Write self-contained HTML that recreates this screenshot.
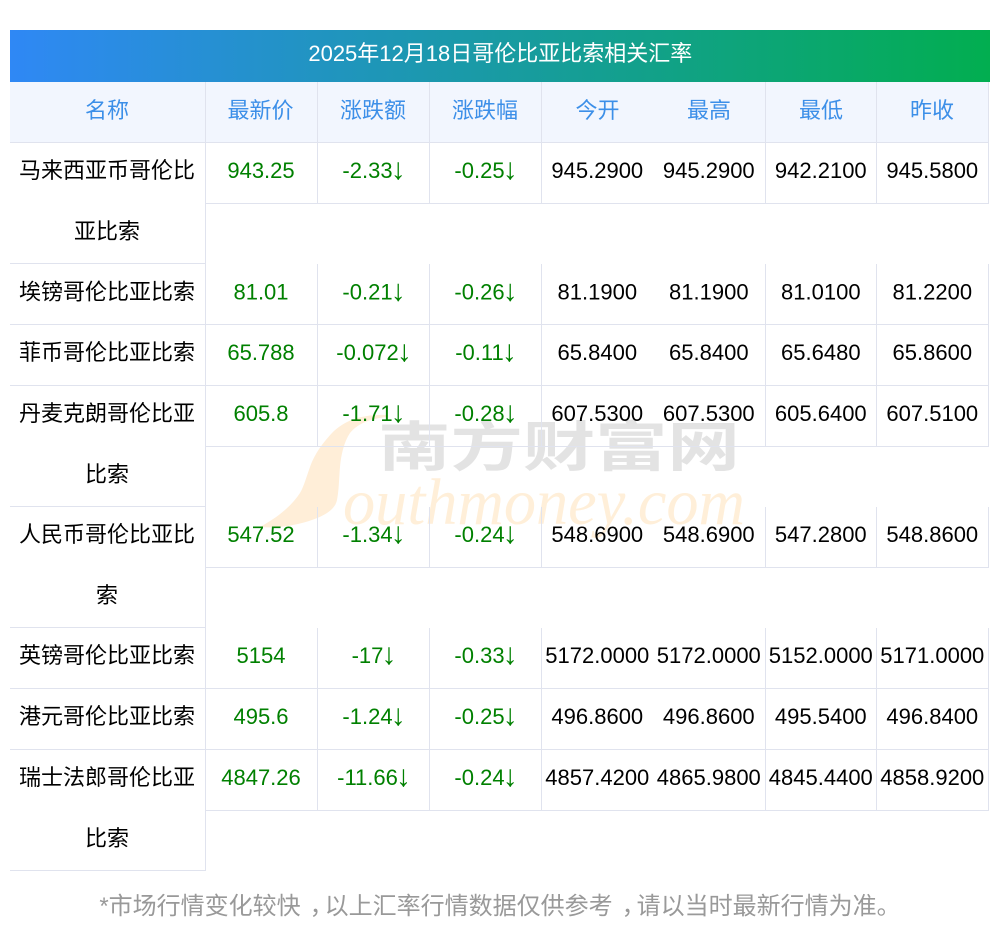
<!DOCTYPE html>
<html lang="zh"><head><meta charset="utf-8"><title>汇率</title>
<style>
html,body{margin:0;padding:0;background:#fff;width:1000px;height:937px;overflow:hidden}
svg{display:block;position:absolute;left:0;top:0}
text{font-family:"Liberation Sans","WenQuanYi Zen Hei",sans-serif;font-size:22px;text-anchor:middle}
.h{fill:#3c8fe8}.g{fill:#008000}.b{fill:#000}
.a{font-size:30px}
</style></head><body>
<svg width="1000" height="937" viewBox="0 0 1000 937">
<defs><linearGradient id="t" x1="0" x2="1" y1="0" y2="0"><stop offset="0" stop-color="#2f88f5"/><stop offset="1" stop-color="#02ae50"/></linearGradient></defs>
<rect x="10" y="30" width="980" height="52" fill="url(#t)"/>
<rect x="10" y="82" width="979" height="60" fill="#f2f6fe"/>
<!-- watermark -->
<path d="M388 415C362 414 345 420 332 433C320 446 314 456 310 467C306 478 304 486 300 493C292 505 280 516 260 527C272 528 283 527 293 525C308 522 319 518 327 513C333 509 336 505 337 500C339 490 339 478 340 467C341 455 344 442 350 433C358 423 372 418 388 417Z" fill="#ffeed8"/>
<text transform="translate(559 466) scale(1.34 1)" style="font-family:'Noto Sans CJK SC',sans-serif;font-size:54px;font-weight:700;fill:#e3e3e3">南方财富网</text>
<text x="544" y="524" style="font-family:'Liberation Serif',serif;font-style:italic;font-size:66px;fill:#ffefd9" textLength="402" lengthAdjust="spacingAndGlyphs">outhmoney.com</text>
<!-- grid -->
<g stroke="#e0e3ee" stroke-width="1" fill="none" shape-rendering="crispEdges">
<path d="M10 142.5H989M10 263.5H205M10 324.5H989M10 385.5H989M10 506.5H205M10 627.5H205M10 688.5H989M10 749.5H989M10 870.5H206"/>
<path d="M205 203.5H989M205 446.5H989M205 567.5H989M205 810.5H989"/>
<path d="M205.500 82V871"/>
<path d="M317.500 82V204M317.500 264V447M317.500 507V568M317.500 628V811"/>
<path d="M429.500 82V204M429.500 264V447M429.500 507V568M429.500 628V811"/>
<path d="M541.500 82V204M541.500 264V447M541.500 507V568M541.500 628V811"/>
<path d="M765.500 82V204M765.500 264V447M765.500 507V568M765.500 628V811"/>
<path d="M876.500 82V204M876.500 264V447M876.500 507V568M876.500 628V811"/>
<path d="M988.500 82V204M988.500 264V447M988.500 507V568M988.500 628V811"/>
</g>
<text x="500.300" y="61" fill="#fff">2025年12月18日哥伦比亚比索相关汇率</text>
<g class="h">
<text x="107" y="118">名称</text><text x="260.500" y="118">最新价</text><text x="373" y="118">涨跌额</text><text x="485" y="118">涨跌幅</text><text x="597.500" y="118">今开</text><text x="709" y="118">最高</text><text x="821" y="118">最低</text><text x="932" y="118">昨收</text>
</g>
<g class="b">
<text x="107" y="178">马来西亚币哥伦比</text><text x="107" y="239">亚比索</text>
<text x="107" y="299.500">埃镑哥伦比亚比索</text>
<text x="107" y="360">菲币哥伦比亚比索</text>
<text x="107" y="421">丹麦克朗哥伦比亚</text><text x="107" y="482">比索</text>
<text x="107" y="542">人民币哥伦比亚比</text><text x="107" y="603">索</text>
<text x="107" y="663">英镑哥伦比亚比索</text>
<text x="107" y="724">港元哥伦比亚比索</text>
<text x="107" y="785">瑞士法郎哥伦比亚</text><text x="107" y="846">比索</text>
</g>
<g class="g">
<text x="261" y="178">943.25</text><text x="374" y="178">-2.33<tspan class="a" dx="-2" dy="1">↓</tspan></text><text x="486" y="178">-0.25<tspan class="a" dx="-2" dy="1">↓</tspan></text>
<text x="261" y="299.500">81.01</text><text x="374" y="299.500">-0.21<tspan class="a" dx="-2" dy="1">↓</tspan></text><text x="486" y="299.500">-0.26<tspan class="a" dx="-2" dy="1">↓</tspan></text>
<text x="261" y="360">65.788</text><text x="374" y="360">-0.072<tspan class="a" dx="-2" dy="1">↓</tspan></text><text x="486" y="360">-0.11<tspan class="a" dx="-2" dy="1">↓</tspan></text>
<text x="261" y="421">605.8</text><text x="374" y="421">-1.71<tspan class="a" dx="-2" dy="1">↓</tspan></text><text x="486" y="421">-0.28<tspan class="a" dx="-2" dy="1">↓</tspan></text>
<text x="261" y="542">547.52</text><text x="374" y="542">-1.34<tspan class="a" dx="-2" dy="1">↓</tspan></text><text x="486" y="542">-0.24<tspan class="a" dx="-2" dy="1">↓</tspan></text>
<text x="261" y="663">5154</text><text x="374" y="663">-17<tspan class="a" dx="-2" dy="1">↓</tspan></text><text x="486" y="663">-0.33<tspan class="a" dx="-2" dy="1">↓</tspan></text>
<text x="261" y="724">495.6</text><text x="374" y="724">-1.24<tspan class="a" dx="-2" dy="1">↓</tspan></text><text x="486" y="724">-0.25<tspan class="a" dx="-2" dy="1">↓</tspan></text>
<text x="261" y="785">4847.26</text><text x="374" y="785">-11.66<tspan class="a" dx="-2" dy="1">↓</tspan></text><text x="486" y="785">-0.24<tspan class="a" dx="-2" dy="1">↓</tspan></text>
</g>
<g class="b">
<text x="597.300" y="178">945.2900</text><text x="708.800" y="178">945.2900</text><text x="820.800" y="178">942.2100</text><text x="932.300" y="178">945.5800</text>
<text x="597.300" y="299.500">81.1900</text><text x="708.800" y="299.500">81.1900</text><text x="820.800" y="299.500">81.0100</text><text x="932.300" y="299.500">81.2200</text>
<text x="597.300" y="360">65.8400</text><text x="708.800" y="360">65.8400</text><text x="820.800" y="360">65.6480</text><text x="932.300" y="360">65.8600</text>
<text x="597.300" y="421">607.5300</text><text x="708.800" y="421">607.5300</text><text x="820.800" y="421">605.6400</text><text x="932.300" y="421">607.5100</text>
<text x="597.300" y="542">548.6900</text><text x="708.800" y="542">548.6900</text><text x="820.800" y="542">547.2800</text><text x="932.300" y="542">548.8600</text>
<text x="597.300" y="663">5172.0000</text><text x="708.800" y="663">5172.0000</text><text x="820.800" y="663">5152.0000</text><text x="932.300" y="663">5171.0000</text>
<text x="597.300" y="724">496.8600</text><text x="708.800" y="724">496.8600</text><text x="820.800" y="724">495.5400</text><text x="932.300" y="724">496.8400</text>
<text x="597.300" y="785">4857.4200</text><text x="708.800" y="785">4865.9800</text><text x="820.800" y="785">4845.4400</text><text x="932.300" y="785">4858.9200</text>
</g>
<text x="500" y="914" style="font-size:24px;fill:#999">*市场行情变化较快<tspan dx="9">，</tspan><tspan dx="-9">以上汇率行情数据仅供参考</tspan><tspan dx="9">，</tspan><tspan dx="-9">请以当时最新行情为准。</tspan></text>
</svg>
</body></html>
